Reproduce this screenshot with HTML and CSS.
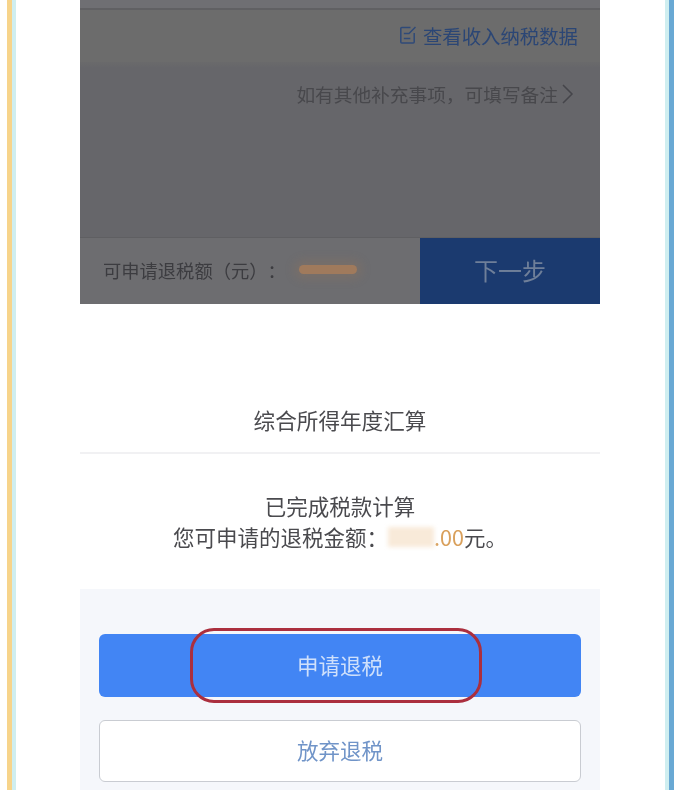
FILE: index.html
```html
<!DOCTYPE html>
<html lang="zh-CN">
<head>
<meta charset="utf-8">
<title>综合所得年度汇算</title>
<link rel="stylesheet" href="styles.css">
</head>
<body>
<div class="frame">
  <div class="stripe orange"></div>
  <div class="stripe cyan"></div>
  <main class="main">
    <section class="shot dim">
      <div class="top-strip"></div>
      <div class="link-row">
        <svg class="edit-icon" viewBox="0 0 16 18" width="16" height="18" aria-hidden="true">
          <path d="M10.5 1.5H1.8a1 1 0 0 0-1 1v13.5a1 1 0 0 0 1 1h11.4a1 1 0 0 0 1-1V7" fill="none" stroke="#2f4a78" stroke-width="1.5"/>
          <path d="M3.8 7.5h5.2L15.5 1M3.8 12.5h6.5" fill="none" stroke="#2f4a78" stroke-width="1.5"/>
        </svg>
        <span class="link-text">查看收入纳税数据</span>
      </div>
      <div class="note-area">
        <div class="note-row">
          <span>如有其他补充事项，可填写备注</span>
          <svg class="chevron" viewBox="0 0 14 22" width="14" height="22" aria-hidden="true">
            <path d="M3 2l9 9-9 9" fill="none" stroke="#45454a" stroke-width="1.5"/>
          </svg>
        </div>
      </div>
      <div class="bottom-bar">
        <div class="refund-label">
          <span>可申请退税额（元）：</span>
          <span class="smudge-dark"></span>
        </div>
        <div class="next-btn">下一步</div>
      </div>
    </section>
    <section class="shot dialog">
      <h1 class="dialog-title">综合所得年度汇算</h1>
      <div class="dialog-body">
        <p>已完成税款计算</p>
        <p class="amount-line">您可申请的退税金额：<span class="smudge-light"></span><span class="amount">.00</span>元。</p>
      </div>
      <div class="actions">
        <div class="btn primary">
          <span class="btn-label">申请退税</span>
          <span class="ring"></span>
        </div>
        <div class="btn secondary"><span class="btn-label">放弃退税</span></div>
      </div>
    </section>
  </main>
  <div class="stripe cyan"></div>
  <div class="stripe blue"></div>
</div>
</body>
</html>
```
FILE: styles.css
```css
* { box-sizing: border-box; }
html, body { margin: 0; padding: 0; background: #fff; }
body {
  font-family: "Noto Sans CJK SC", "Liberation Sans", sans-serif;
  text-spacing-trim: space-all;
}

.frame {
  display: flex;
  height: 790px;
  padding: 0 5px 0 7px;
  overflow: hidden;
}
.stripe { flex: none; height: 100%; }
.stripe.orange, .stripe.blue { width: 5px; }
.stripe.orange { background: #f7d48b; }
.stripe.blue { background: #69a9d4; }
.stripe.cyan { width: 4px; background: #cfeef0; }

.main {
  flex: 1;
  padding-left: 64px;
  min-width: 0;
}
.shot { width: 520px; }

/* dimmed upper screenshot */
.dim {
  height: 304px;
  display: flex;
  flex-direction: column;
  background: #66666a;
  color: #47474b;
}
.top-strip {
  height: 10px;
  flex: none;
  background: #6f6f73;
  border-bottom: 2px solid #606063;
}
.link-row {
  height: 52px;
  flex: none;
  display: flex;
  align-items: center;
  justify-content: flex-end;
  gap: 7px;
  padding: 0 22px 2px 0;
  background: #6c6c6c;
  color: #2b4675;
  font-size: 19.4px;
}
.edit-icon { flex: none; filter: blur(0.4px); }
.link-text, .note-row span, .refund-label span, .next-btn, .dialog-title, .dialog-body p, .btn-label { filter: blur(0.4px); }
.note-area {
  flex: 1;
  min-height: 0;
  background: linear-gradient(#6a6a6b, #66666a 6px);
}
.note-row {
  display: flex;
  align-items: center;
  justify-content: flex-end;
  gap: 2px;
  padding: 19px 26px 0 0;
  font-size: 18.7px;
  line-height: 26px;
  color: #48484c;
}
.chevron { flex: none; }
.bottom-bar {
  height: 67px;
  flex: none;
  display: flex;
  background: #6d6d70;
  border-top: 1px solid #5f5f62;
}
.refund-label {
  flex: 1;
  display: flex;
  align-items: center;
  padding: 0 0 3px 23px;
  font-size: 18.3px;
  color: #3c3c40;
}
.smudge-dark {
  width: 58px;
  height: 9px;
  margin-left: 13px;
  border-radius: 5px;
  background: #a07a5c;
  box-shadow: 0 0 10px 5px rgba(150, 115, 90, 0.3);
  filter: blur(2px);
}
.next-btn {
  width: 180px;
  flex: none;
  display: flex;
  align-items: center;
  justify-content: center;
  padding: 0 0 4px 0;
  background: #1b3a6f;
  color: #6f7f99;
  font-size: 24px;
}

/* result dialog */
.dialog {
  display: flex;
  flex-direction: column;
  height: 486px;
  background: #fff;
}
.dialog-title {
  margin: 0;
  height: 150px;
  flex: none;
  padding-top: 100px;
  border-bottom: 2px solid #f1f1f3;
  text-align: center;
  font-size: 21.6px;
  font-weight: 400;
  line-height: 32px;
  color: #4a4a4e;
}
.dialog-body {
  height: 135px;
  flex: none;
  padding-top: 36px;
  text-align: center;
  font-size: 21.5px;
  line-height: 31px;
  color: #4a4a4e;
}
.dialog-body p { margin: 0; }
.amount-line { display: flex; justify-content: center; align-items: center; }
.smudge-light {
  width: 46px;
  height: 20px;
  background: #f8ead9;
  filter: blur(2px);
}
.amount { color: #d9a05c; }
.actions {
  flex: 1;
  min-height: 0;
  display: flex;
  flex-direction: column;
  gap: 23px;
  padding: 45px 19px 0;
  background: #f5f7fb;
}
.btn {
  display: flex;
  align-items: center;
  justify-content: center;
  flex: none;
  border-radius: 6px;
  font-size: 21.5px;
  position: relative;
  padding-bottom: 3px;
}
.btn.primary {
  height: 63px;
  background: #4285f4;
  color: #cfe0fb;
}
.btn.secondary {
  height: 62px;
  background: #fff;
  border: 1px solid #c9ccd2;
  color: #7094c8;
}
.ring {
  position: absolute;
  left: 91px;
  top: -6px;
  width: 292px;
  height: 75px;
  border: 3px solid #ab2f3e;
  border-radius: 24px;
  filter: blur(0.4px);
}
```
